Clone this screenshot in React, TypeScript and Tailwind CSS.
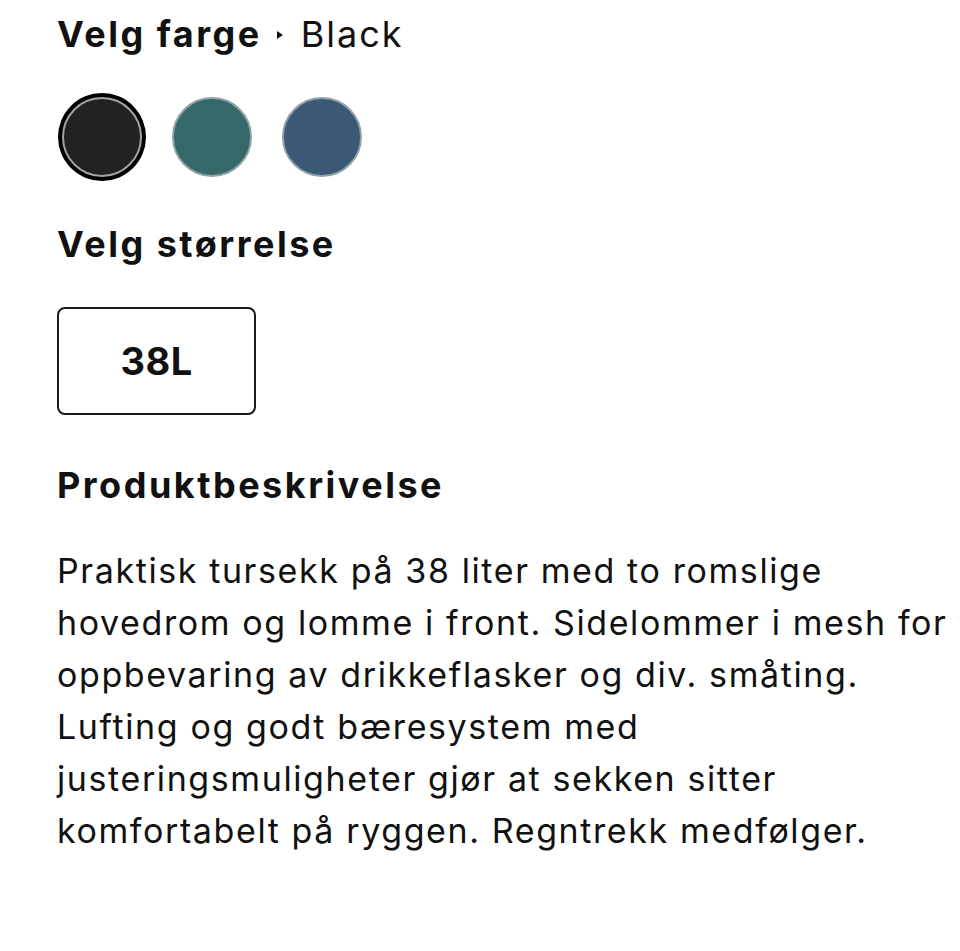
import React from "react";

const swatches = [
    { name: "Black", color: "bg-[#222222]", selected: true },
    { name: "Green", color: "bg-[#356868]", selected: false },
    { name: "Blue", color: "bg-[#3b5877]", selected: false },
];

const lines = [
    "Praktisk tursekk på 38 liter med to romslige",
    "hovedrom og lomme i front. Sidelommer i mesh for",
    "oppbevaring av drikkeflasker og div. småting.",
    "Lufting og godt bæresystem med",
    "justeringsmuligheter gjør at sekken sitter",
    "komfortabelt på ryggen. Regntrekk medfølger.",
];

export default function App() {
    return (
        <div className="min-h-screen bg-white pl-[57px] pt-[12px] text-[#111] font-['Inter',sans-serif]">
            <div className="flex items-baseline">
                <h2 className="text-[36px] leading-[44px] font-bold tracking-[2.5px]">Velg farge</h2>
                <svg className="ml-[15px] self-center mt-[2px]" width="6" height="8" viewBox="0 0 6 8">
                    <polygon points="0,0 6,4 0,8" fill="#111" />
                </svg>
                <span className="ml-[18px] text-[36px] leading-[44px] font-normal tracking-[2px]">Black</span>
            </div>

            <div className="mt-[36px] flex gap-[20px]">
                {swatches.map((s) => (
                    <div key={s.name} className="w-[90px] h-[90px] flex items-center justify-center">
                        <button
                            aria-label={s.name}
                            className={`w-[80px] h-[80px] rounded-full border-2 ${s.color} ${
                                s.selected ? "border-[#a3a3a3] ring-[4px] ring-black" : "border-[#8fa0a6]"
                            }`}
                        />
                    </div>
                ))}
            </div>

            <h2 className="mt-[40px] text-[36px] leading-[44px] font-bold tracking-[2.5px]">Velg størrelse</h2>

            <div className="mt-[41px] w-[199px] h-[108px] rounded-[8px] border-2 border-[#1a1a1a] flex items-center justify-center">
                <span className="text-[38px] font-bold tracking-[0.5px]">38L</span>
            </div>

            <h2 className="mt-[48px] text-[36px] leading-[44px] font-bold tracking-[2.5px]">Produktbeskrivelse</h2>

            <p className="mt-[38px] text-[34px] leading-[52px] whitespace-nowrap tracking-[1.6px]">
                {lines.map((l) => (
                    <span key={l} className="block">{l}</span>
                ))}
            </p>
        </div>
    );
}
